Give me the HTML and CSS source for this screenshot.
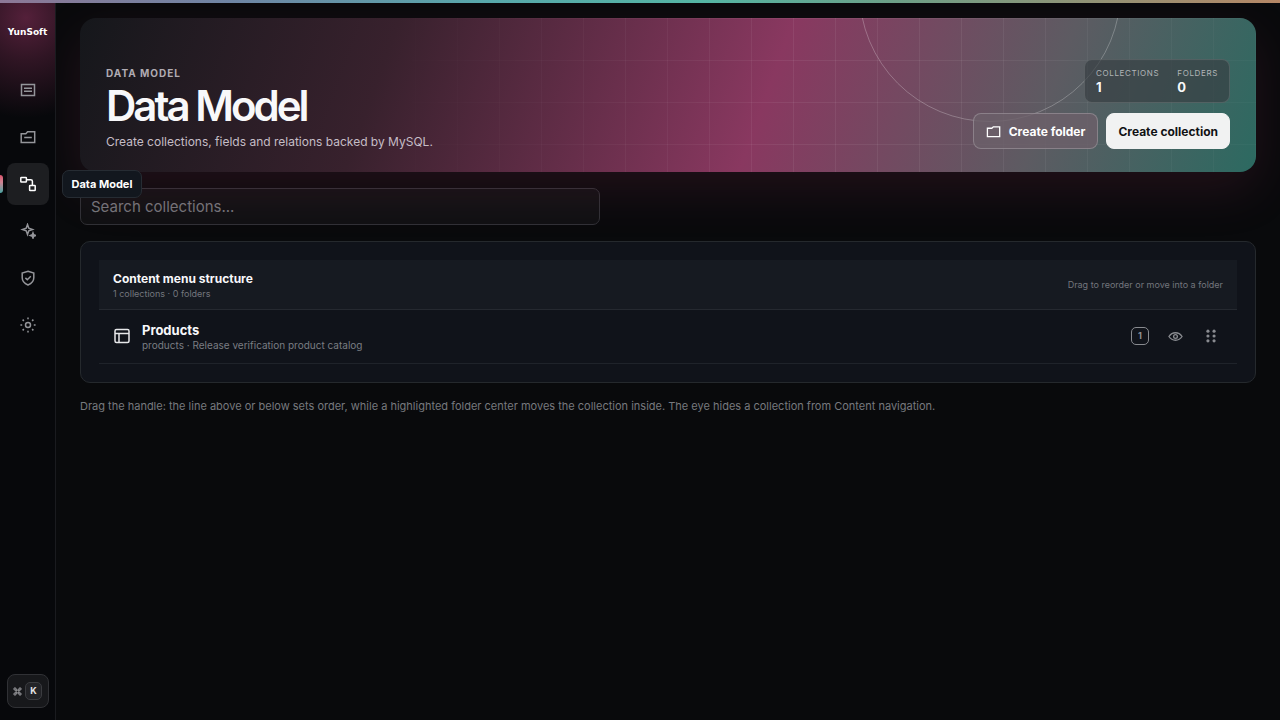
FILE: index.html
```html
<!DOCTYPE html>
<html lang="en">
<head>
<meta charset="utf-8">
<meta name="viewport" content="width=device-width, initial-scale=1">
<title>Data Model</title>
<link rel="stylesheet" href="styles.css">
</head>
<body>
<div class="accent-bar"></div>
<div class="app">
  <aside class="rail">
    <a class="brand" href="#">YunSoft</a>
    <nav class="rail-nav" aria-label="Main">
      <a class="rail-link" href="#" aria-label="Content">
        <svg class="icon" viewBox="0 0 16 16"><path d="M1.500 2.500h13v11h-13zM4 6.200h8M4 9.200h8"/></svg>
      </a>
      <a class="rail-link" href="#" aria-label="Files">
        <svg class="icon" viewBox="0 0 16 16"><path d="M1.200 13.600V4.800h4.600l1.800-2h7.100v10.800zM4.200 8.600h7.600"/></svg>
      </a>
      <a class="rail-link rail-link-active" href="#" aria-current="page">
        <svg class="icon" viewBox="0 0 16 16"><rect x=".8" y="1.400" width="5.600" height="4.600" rx=".6"/><rect x="9.600" y="9.400" width="5.600" height="5.200" rx=".6"/><path d="M6.400 3.700h4.400a1.600 1.600 0 0 1 1.600 1.600v4.100"/></svg>
        <span class="tooltip">Data Model</span>
      </a>
      <a class="rail-link" href="#" aria-label="Assistant">
        <svg class="icon" viewBox="0 0 16 16"><path d="M7.500 1.500 8.800 5.200 12.500 6.500 8.800 7.800 7.500 11.500 6.200 7.800 2.500 6.500 6.200 5.200zM13 9.900l.7 1.900 1.900.7-1.900.7-.7 1.900-.7-1.900-1.900-.7 1.900-.7z"/></svg>
      </a>
      <a class="rail-link" href="#" aria-label="Access">
        <svg class="icon" viewBox="0 0 16 16"><path d="M8 1.200 13.800 3v4.800c0 3.400-2.200 5.700-5.800 7.200-3.600-1.500-5.800-3.800-5.800-7.200V3zM5.400 7.900l1.900 1.900 3.500-3.500"/></svg>
      </a>
      <a class="rail-link" href="#" aria-label="Settings">
        <svg class="icon" viewBox="0 0 16 16"><circle cx="8" cy="8" r="2.500"/><path d="M8 .4v1.800M8 13.800v1.800M.4 8h1.800M13.800 8h1.800M2.600 2.600l1.300 1.300M12.100 12.100l1.300 1.300M2.600 13.400l1.300-1.300M12.100 3.900l1.300-1.300"/></svg>
      </a>
    </nav>
    <button class="shortcut" type="button" aria-label="Command palette">
      <svg class="icon-command" viewBox="0 0 16 16"><path d="M5.500 5.500h5v5h-5zM5.500 5.500H3.700a2 2 0 1 1 1.800-2zM10.500 5.500V3.600a2 2 0 1 1 2 1.900zM10.500 10.500h1.900a2 2 0 1 1-1.900 2zM5.500 10.500v1.900a2 2 0 1 1-2-1.900z"/></svg>
      <kbd class="key">K</kbd>
    </button>
  </aside>

  <main class="main">
    <header class="hero">
      <div class="hero-copy">
        <p class="eyebrow">DATA MODEL</p>
        <h1 class="title">Data Model</h1>
        <p class="lead">Create collections, fields and relations backed by MySQL.</p>
      </div>
      <div class="hero-side">
        <dl class="stats">
          <div><dt>COLLECTIONS</dt><dd>1</dd></div>
          <div><dt>FOLDERS</dt><dd>0</dd></div>
        </dl>
        <div class="actions">
          <button class="button button-ghost" type="button">
            <svg class="icon-folder" viewBox="0 0 16 16"><path d="M1.500 13.500V4.500h4.700l1.600-1.500h6.800v10.500z"/></svg>
            Create folder
          </button>
          <button class="button button-primary" type="button">Create collection</button>
        </div>
      </div>
    </header>

    <input class="search" type="search" aria-label="Search collections" placeholder="Search collections...">

    <section class="panel" aria-labelledby="structure">
      <div class="panel-head">
        <div>
          <h2 class="panel-title" id="structure">Content menu structure</h2>
          <p class="small">1 collections · 0 folders</p>
        </div>
        <p class="small">Drag to reorder or move into a folder</p>
      </div>
      <div class="row">
        <svg class="icon icon-table" viewBox="0 0 16 16"><rect x="1" y="1.500" width="14" height="13" rx="1.500"/><path d="M1 5.500h14M5 5.500v9"/></svg>
        <div class="row-copy">
          <h3 class="row-title">Products</h3>
          <p class="row-note">products · Release verification product catalog</p>
        </div>
        <span class="count">1</span>
        <button class="tool" type="button" aria-label="Hide collection">
          <svg class="icon-eye" viewBox="0 0 16 16"><path d="M1 8c1.800-2.700 4.100-4 7-4s5.200 1.300 7 4c-1.800 2.700-4.100 4-7 4S2.800 10.700 1 8z"/><circle cx="8" cy="8" r="2"/></svg>
        </button>
        <button class="tool" type="button" aria-label="Reorder">
          <svg class="icon-grip" viewBox="0 0 16 16"><circle cx="4.500" cy="2.500" r="1.800"/><circle cx="11.500" cy="2.500" r="1.800"/><circle cx="4.500" cy="8" r="1.800"/><circle cx="11.500" cy="8" r="1.800"/><circle cx="4.500" cy="13.500" r="1.800"/><circle cx="11.500" cy="13.500" r="1.800"/></svg>
        </button>
      </div>
    </section>
    <p class="hint">Drag the handle: the line above or below sets order, while a highlighted folder center moves the collection inside. The eye hides a collection from Content navigation.</p>
  </main>
</div>
</body>
</html>
```
FILE: styles.css
```css
* { box-sizing: border-box; }

body {
  margin: 0;
  background: #090a0c;
  color: #f8f8fa;
  font-family: Inter, "Liberation Sans", sans-serif;
  font-size: 13px;
}

h1, h2, h3, p, dl, dd { margin: 0; }
a { color: inherit; text-decoration: none; }
button { font: inherit; cursor: pointer; }
svg { flex: none; fill: none; stroke: currentColor; }

.accent-bar {
  position: fixed;
  z-index: 5;
  inset: 0 0 auto;
  height: 3px;
  background: linear-gradient(90deg, #8d7896, #6f85a4 18%, #58a8ab 38%, #55b5a4 55%, #6d9f87 70%, #b58766);
}

.app { display: flex; min-height: 100vh; }

/* Navigation rail */
.rail {
  position: relative;
  z-index: 2;
  display: flex;
  flex-direction: column;
  align-items: center;
  flex: none;
  width: 56px;
  padding: 24px 0 12px;
  border-right: 1px solid #1a1b1f;
  background: radial-gradient(circle at 26px 18px, #54203a 0, #301524 42px, #07080b 100px);
}
.brand {
  font: 700 9px/16px "DejaVu Sans", sans-serif;
  color: #fff;
}
.rail-nav {
  display: flex;
  flex-direction: column;
  gap: 5px;
  margin-top: 29px;
}
.rail-link {
  position: relative;
  display: grid;
  place-items: center;
  width: 42px;
  height: 42px;
  border-radius: 8px;
  color: #94959a;
}
.icon { width: 16px; height: 16px; stroke-width: 1.5; }
.rail-link-active { background: #1d1e21; color: #fff; }
.rail-link-active::before {
  content: "";
  position: absolute;
  left: -7px;
  width: 3px;
  height: 18px;
  border-radius: 0 3px 3px 0;
  background: linear-gradient(#d8546c, #cf8291 40%, #48a6a4);
}
.tooltip {
  position: absolute;
  z-index: 4;
  left: 55px;
  padding: 5px 9px;
  border: 1px solid #262c33;
  border-radius: 7px;
  background: #12171e;
  color: #fff;
  font-size: 11px;
  font-weight: 700;
  line-height: 16px;
  white-space: nowrap;
}
.shortcut {
  display: flex;
  align-items: center;
  justify-content: center;
  gap: 3px;
  width: 42px;
  height: 34px;
  margin-top: auto;
  padding: 0;
  border: 1px solid #303135;
  border-radius: 8px;
  background: #17181b;
  color: #b0b0b4;
}
.icon-command { width: 9px; height: 9px; stroke-width: 1.6; }
.key {
  width: 17px;
  border: 1px solid #3b3c40;
  border-radius: 5px;
  background: #222327;
  color: #e2e2e5;
  font: 700 9px/16px Inter, sans-serif;
}

/* Page */
.main {
  flex: 1;
  min-width: 0;
  padding: 18px 24px;
}
.hero {
  position: relative;
  display: flex;
  align-items: flex-end;
  justify-content: space-between;
  min-height: 154px;
  padding: 23px 26px;
  overflow: hidden;
  border-radius: 16px;
  background: linear-gradient(110deg, #15171b 0, #38212d 26%, #893860 58%, #5d5b62 81%, #2c6a61 100%);
  box-shadow: 0 18px 50px #a8306028;
}
.hero::before {
  content: "";
  position: absolute;
  inset: 0;
  background:
    linear-gradient(90deg, transparent 41px, #ffffff10 41px) 0 0 / 42px 42px,
    linear-gradient(transparent 41px, #ffffff10 41px) 0 1px / 42px 42px;
  mask-image: linear-gradient(90deg, transparent 25%, #000 60%, #000 75%, #0006);
}
.hero::after {
  content: "";
  position: absolute;
  top: -158px;
  right: 135px;
  width: 260px;
  height: 260px;
  border: 1px solid #ffffff40;
  border-radius: 50%;
}
.hero-copy, .hero-side { position: relative; z-index: 1; }
.eyebrow {
  color: #b0abb2;
  font-size: 10px;
  font-weight: 700;
  line-height: 16px;
  letter-spacing: 1px;
}
.title {
  margin: 2px 0 6px;
  font-size: 42px;
  font-weight: 600;
  line-height: 46px;
  letter-spacing: -3px;
}
.lead { color: #c5bdc6; font-size: 12px; line-height: 14px; }
.hero-side {
  display: flex;
  flex-direction: column;
  align-items: flex-end;
  gap: 10px;
}
.stats {
  display: flex;
  gap: 18px;
  padding: 7px 11px;
  border: 1px solid #ffffff20;
  border-radius: 8px;
  background: #363c41a8;
}
.stats dt {
  color: #b1b5b7;
  font-size: 8px;
  line-height: 12px;
  letter-spacing: 0.08em;
}
.stats dd { font-size: 13px; font-weight: 700; line-height: 16px; }
.actions { display: flex; gap: 8px; }
.button {
  display: flex;
  align-items: center;
  gap: 8px;
  height: 36px;
  border: 1px solid #f1f2f2;
  border-radius: 8px;
  font-size: 12px;
  font-weight: 700;
}
.button-ghost {
  padding: 0 12px;
  border-color: #ffffff38;
  background: #6c6069d0;
  color: #fff;
}
.button-primary { padding: 0 11px; background: #f1f2f2; color: #111315; }
.icon-folder { width: 15px; height: 15px; stroke-width: 1.4; }

.search {
  display: block;
  width: 100%;
  max-width: 520px;
  height: 37px;
  margin: 16px 0;
  padding: 0 10px;
  border: 1px solid #303136;
  border-radius: 7px;
  background: #ffffff08;
  color: #fff;
  font: 400 15px/20px Inter, sans-serif;
}
.search::placeholder { color: #74757a; opacity: 1; }

.panel {
  position: relative;
  padding: 18px;
  border: 1px solid #25292d;
  border-radius: 10px;
  background: #10131a;
}
.panel-head {
  display: flex;
  align-items: center;
  justify-content: space-between;
  min-height: 50px;
  padding: 9px 14px 10px;
  border-bottom: 1px solid #252930;
  background: #161a21;
}
.panel-title { font-size: 12px; font-weight: 700; line-height: 18px; }
.small { color: #73767d; font-size: 9px; line-height: 11px; }
.row {
  display: flex;
  align-items: center;
  gap: 12px;
  min-height: 54px;
  padding: 7px 14px 8px;
  border-bottom: 1px solid #1f232a;
}
.icon-table { color: #e7e8ea; margin-left: 1px; }
.row-copy { flex: 1; }
.row-title { font-size: 13px; font-weight: 700; line-height: 18px; }
.row-note { color: #7a7d83; font-size: 10px; line-height: 12px; }
.count {
  width: 18px;
  margin-right: 2px;
  border: 1px solid #888a8f;
  border-radius: 5px;
  color: #8e9095;
  font-size: 9px;
  font-weight: 700;
  line-height: 16px;
  text-align: center;
}
.tool {
  display: grid;
  place-items: center;
  width: 24px;
  height: 24px;
  padding: 0;
  border: 0;
  background: none;
  color: #898b90;
}
.icon-eye { width: 15px; height: 15px; stroke-width: 1.4; }
.icon-grip { width: 14px; height: 14px; fill: currentColor; stroke: none; }
.hint { margin-top: 14px; color: #77797e; font-size: 11px; line-height: 18px; }
```
